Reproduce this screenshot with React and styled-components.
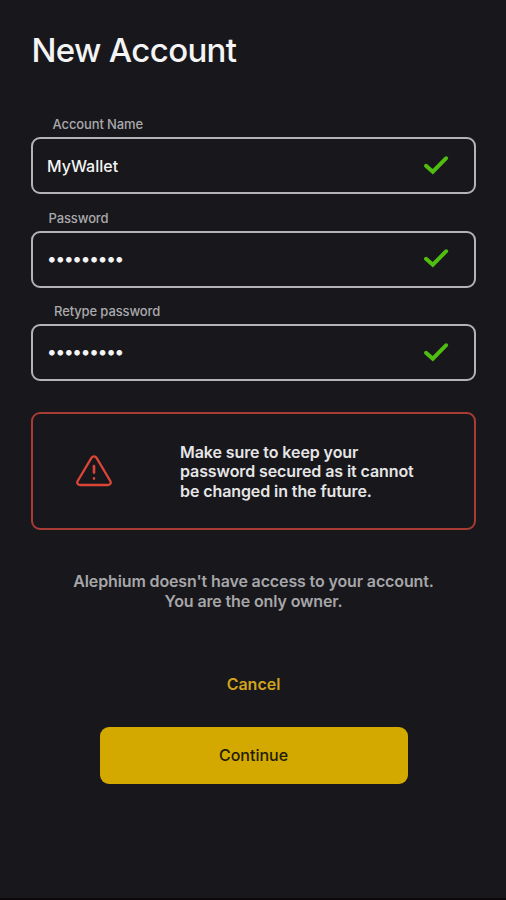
import React, { useState } from 'react'
import styled, { createGlobalStyle } from 'styled-components';

const GlobalStyle = createGlobalStyle`
  * {
    box-sizing: border-box;
  }
  body {
    margin: 0;
    background: #18171c;
    font-family: Inter, 'Liberation Sans', sans-serif;
  }
`;

const CheckMark = () => (
  <svg width="26" height="20" viewBox="0 0 26 20" fill="none">
    <path d="M3 10.7 L9.8 16.7 L23.2 3.2" stroke="#4fbe10" strokeWidth="3.9" strokeLinecap="round" strokeLinejoin="miter" />
  </svg>
)

const WarningSign = () => (
  <svg width="36" height="32" viewBox="0 0 36 32" fill="none" stroke="#dc4637" strokeWidth="2.3" strokeLinecap="round" strokeLinejoin="round">
    <path d="M15.6 2.6 L1.7 26 C0.6 28 1.8 30 4 30 H32 C34.2 30 35.4 28 34.3 26 L20.4 2.6 C19.3 0.9 16.7 0.9 15.6 2.6 Z" />
    <path d="M18 11 V17.6 M18 23.4 V23.6" strokeWidth="2.6" />
  </svg>
)

const Field = ({ id, label, indent, type = 'text', value, onChange }) => (
  <FieldWrap>
    <Label htmlFor={id} $indent={indent}>{label}</Label>
    <InputBox>
      <Input id={id} type={type} value={value} onChange={(e) => onChange(e.target.value)} />
      {value && <CheckMark />}
    </InputBox>
  </FieldWrap>
)

export default function App() {
  const [name, setName] = useState('MyWallet');
  const [password, setPassword] = useState('alephium1');
  const [retyped, setRetyped] = useState('alephium1');

  return (
    <Page>
      <GlobalStyle />
      <Title>New Account</Title>
      <Form>
        <Field id="name" label="Account Name" indent={21.5} value={name} onChange={setName} />
        <Field id="password" label="Password" indent={17.5} type="password" value={password} onChange={setPassword} />
        <Field id="retype" label="Retype password" indent={23} type="password" value={retyped} onChange={setRetyped} />
      </Form>
      <Warning>
        <WarningIcon><WarningSign /></WarningIcon>
        <WarningText>
          Make sure to keep your<br />
          password secured as it cannot<br />
          be changed in the future.
        </WarningText>
      </Warning>
      <Note>
        Alephium doesn't have access to your account.<br />
        You are the only owner.
      </Note>
      <Actions>
        <Cancel>Cancel</Cancel>
        <Continue>Continue</Continue>
      </Actions>
    </Page>
  )
}

const Page = styled.main`
  display: flex;
  flex-direction: column;
  height: 900px;
  padding: 30px 30px 0 31px;
  border-bottom: 2px solid #0c080b;
  overflow: hidden;
`;

const Title = styled.h1`
  margin: 0 0 0 0.5px;
  font-size: 33px;
  font-weight: 500;
  line-height: 40px;
  letter-spacing: -0.65px;
  color: #f4f4f4;
  white-space: nowrap;
`;

const Form = styled.div`
  display: flex;
  flex-direction: column;
  gap: 13.5px;
  margin-top: 44px;
`;

const FieldWrap = styled.div`
  display: flex;
  flex-direction: column;
  height: 80px;
`;

const Label = styled.label`
  height: 23px;
  padding-left: ${(props) => props.$indent}px;
  font-size: 13px;
  font-weight: 500;
  line-height: 20px;
  letter-spacing: -0.12px;
  color: #a9a9ab;
`;

const InputBox = styled.div`
  display: flex;
  align-items: center;
  justify-content: space-between;
  height: 57px;
  padding: 0 25px 2px 14px;
  border: 2px solid #b4b4b6;
  border-radius: 9px;
`;

const Input = styled.input`
  width: 300px;
  padding: ${(props) => (props.type === 'password' ? '0' : '2px 0 0')};
  border: 0;
  outline: 0;
  background: transparent;
  font-family: inherit;
  font-size: ${(props) => (props.type === 'password' ? '18px' : '16px')};
  font-weight: 500;
  letter-spacing: ${(props) => (props.type === 'password' ? '-1.15px' : '0')};
  color: #f4f4f4;
`;

const Warning = styled.div`
  display: flex;
  align-items: center;
  height: 118px;
  flex-shrink: 0;
  margin-top: 31px;
  border: 2px solid #a83b33;
  border-radius: 9px;
`;

const WarningIcon = styled.div`
  display: flex;
  justify-content: center;
  width: 122px;
`;

const WarningText = styled.p`
  margin: 2px 0 0 25px;
  font-size: 16px;
  font-weight: 600;
  line-height: 19.6px;
  letter-spacing: -0.09px;
  color: #e6e6e6;
  white-space: nowrap;
`;

const Note = styled.p`
  margin: 41px 0 0;
  font-size: 16px;
  font-weight: 600;
  line-height: 20px;
  letter-spacing: -0.13px;
  text-align: center;
  color: #a6a6a8;
  white-space: nowrap;
`;

const Actions = styled.div`
  display: flex;
  flex-direction: column;
  align-items: center;
  gap: 14px;
  margin-top: 45px;
`;

const Button = styled.button`
  width: 308px;
  height: 57px;
  padding: 0 0 2px;
  border: 0;
  border-radius: 9px;
  font-family: inherit;
  font-size: 16px;
  cursor: pointer;
`;

const Cancel = styled(Button)`
  background: transparent;
  color: #d0a31c;
  font-weight: 600;
`;

const Continue = styled(Button)`
  background: #d3a900;
  color: #221c08;
  font-weight: 500;
`;
